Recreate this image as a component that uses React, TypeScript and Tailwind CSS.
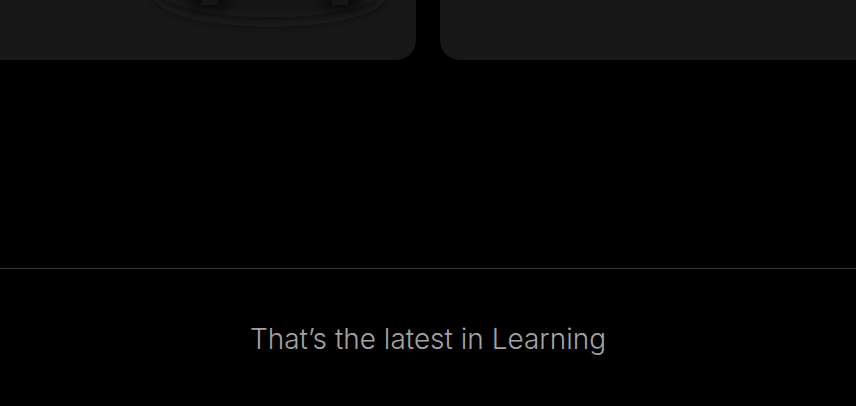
export default function App() {
  return (
    <div className="min-h-screen w-full overflow-hidden bg-black" style={{ fontFamily: "Inter, 'Noto Sans', sans-serif" }}>
      {/* carousel cards, scrolled so only their bottoms show */}
      <div className="flex gap-6">
        <div className="relative h-[60px] w-[416px] shrink-0 overflow-hidden rounded-br-[20px] bg-[#181818]">
          <svg className="absolute left-[120px] top-[-40px]" width="300" height="90" viewBox="0 0 300 90">
            <defs>
              <filter id="blur" x="-50%" y="-100%" width="200%" height="300%">
                <feGaussianBlur stdDeviation="7" />
              </filter>
            </defs>
            <ellipse cx="150" cy="32" rx="116" ry="30" fill="#131414" filter="url(#blur)" />
            <ellipse cx="90" cy="42" rx="22" ry="5" fill="#0d0e0e" filter="url(#blur)" />
            <ellipse cx="220" cy="42" rx="22" ry="5" fill="#0d0e0e" filter="url(#blur)" />
          </svg>
        </div>
        <div className="h-[60px] flex-1 rounded-bl-[20px] bg-[#181818]" />
      </div>

      <div className="mt-[208px] border-t border-[#353535] pt-[49px] text-center">
        <p className="text-[28px] font-light leading-[42px] text-[#a3a3a3]">That’s the latest in Learning</p>
      </div>
    </div>
  );
}
